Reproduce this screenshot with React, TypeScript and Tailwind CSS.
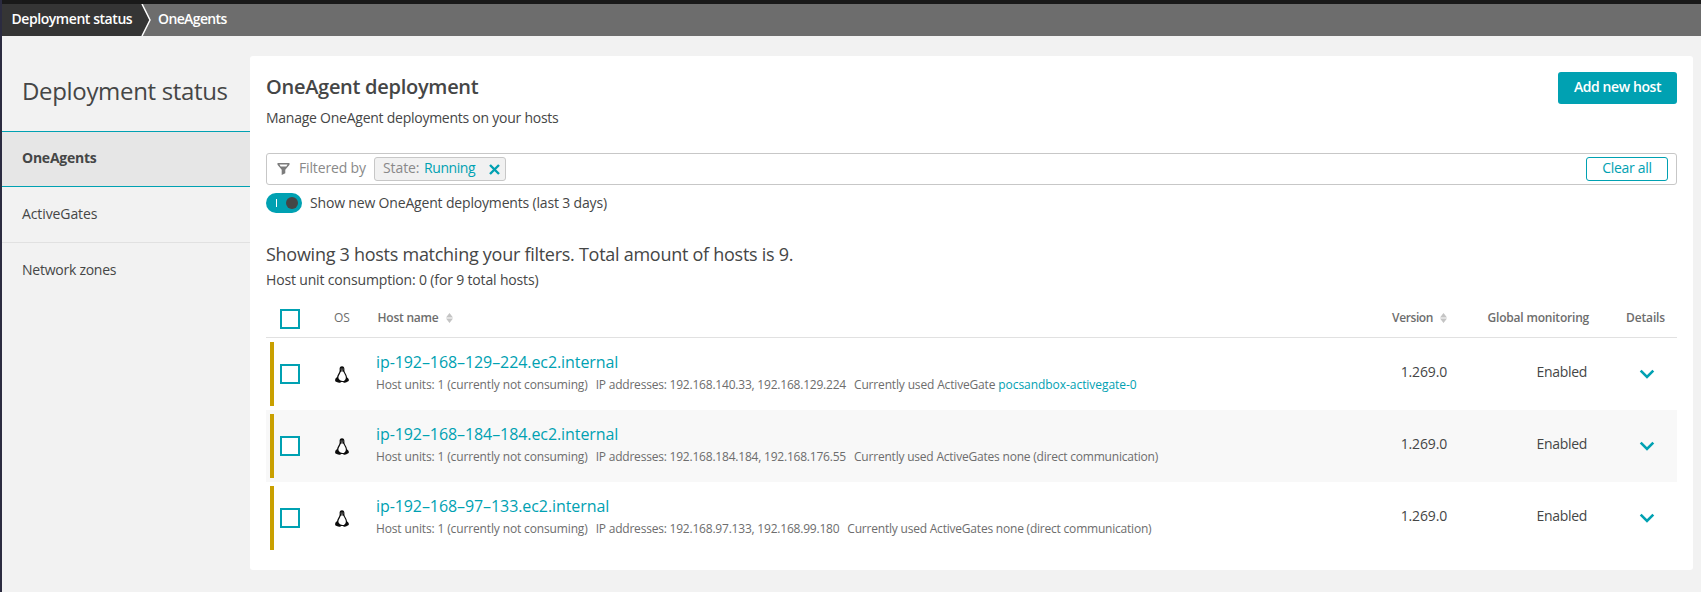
import type { ReactNode } from "react";

const hosts = [
  { name: "ip-192–168–129–224.ec2.internal", ips: "192.168.140.33, 192.168.129.224", gate: "pocsandbox-activegate-0" },
  { name: "ip-192–168–184–184.ec2.internal", ips: "192.168.184.184, 192.168.176.55", gate: null },
  { name: "ip-192–168–97–133.ec2.internal", ips: "192.168.97.133, 192.168.99.180", gate: null },
];

const columns = "grid grid-cols-[68px_42px_1fr_120px_145px_86px]";

function Checkbox() {
  return <div role="checkbox" aria-checked="false" className="size-5 border-2 border-[#00a1b2] bg-white" />;
}

function SortIcon() {
  return (
    <svg width="7" height="10" viewBox="0 0 7 10" fill="#c4c4c4">
      <path d="M3.5 0 7 4.400H0zM3.5 10 0 5.600h7z" />
    </svg>
  );
}

function Tux() {
  return (
    <svg width="14" height="17" viewBox="0 0 14 17">
      <path
        fill="#0c0c0c"
        d="M7 .2C5.3.2 4.5 1.4 4.6 3c.1 1.700.1 2.600-.8 4.100C2.800 8.500 2.200 10 2 11.300.7 12 .1 13.200.1 14.300c0 1.200.6 1.500 1.600 1.700 1.100.3 2.100.9 3.100.7.7-.1 1-.5 1.300-.8h1.900c.3.3.6.7 1.300.8 1 .1 1.700-.4 2.700-.8 1-.4 1.900-.6 1.900-1.600 0-1.100-.7-2.200-1.800-2.800-.2-1.600-.8-3-1.800-4.400C9.400 5.600 9.400 4.700 9.400 3 9.400 1.300 8.700.2 7 .2Z"
      />
      <path fill="#fff" d="M7 5.300c1.200 0 1.700.9 2.200 2 .6 1.400 1.600 2.600 1.600 4.300 0 1.600-.7 2.900-1.900 3.300-1.100.3-2.500.2-3.300-.3-1-.7-2.200-1.700-2.200-3.100s1-2.600 1.600-3.900C5.400 6.400 5.800 5.300 7 5.300Z" />
      <path fill="#9a9a9a" d="M5.700 2.500h.9v1.200h-.9zM7.500 2.500h.9v1.200h-.9zM5.900 4.100h2.300l-1.200.9z" />
    </svg>
  );
}

function Chevron() {
  return (
    <svg width="16" height="11" viewBox="0 0 16 11" fill="none" stroke="#00a1b2" strokeWidth="2.6">
      <path d="M1.700 1.600 8 7.900l6.300-6.300" />
    </svg>
  );
}

function Header({ children, className = "" }: { children: ReactNode; className?: string }) {
  return <div className={`flex items-center pb-px text-[12px] leading-4 text-[#6d6d6d] ${className}`}>{children}</div>;
}

export default function App() {
  return (
    <div className="flex h-[592px] w-full overflow-hidden bg-[#f2f2f2] font-['Open_Sans','Noto_Sans',sans-serif] text-[14px] leading-5 whitespace-nowrap text-[#454646]">
      <div className="w-[2px] shrink-0 bg-[#2b2b40]" />
      <div className="flex min-w-0 flex-1 flex-col">
        <div className="h-1 shrink-0 bg-[#191919]" />
        <nav className="flex h-8 shrink-0 bg-[#6d6d6d] font-semibold text-white">
          <div className="w-[139px] bg-[#353535] pt-[5px] pl-[9.5px] tracking-[-0.44px]">Deployment status</div>
          <svg width="11" height="32" viewBox="0 0 11 32">
            <path d="M0 0h1l8 16-8 16H0z" fill="#353535" />
            <path d="M1 0l8 16-8 16" fill="none" stroke="#fff" strokeWidth="1.5" />
          </svg>
          <div className="pt-[5px] pl-[6px] tracking-[-0.62px]">OneAgents</div>
        </nav>

        <div className="flex flex-1">
          <aside className="w-[248px] shrink-0">
            <h1 className="h-[95px] pt-[37px] pl-[20px] text-[24px] leading-9 tracking-[-0.33px]">Deployment status</h1>
            <div className="flex h-14 items-center border-y border-[#00a1b2] bg-[#e6e6e6] pb-0.5 pl-5 font-bold tracking-[-0.24px]">OneAgents</div>
            <div className="flex h-14 items-center border-b border-[#e1e1e1] pb-px pl-5 tracking-[-0.1px]">ActiveGates</div>
            <div className="flex h-14 items-center pb-0.5 pl-5 tracking-[-0.25px]">Network zones</div>
          </aside>

          <main className="mt-5 h-[514px] w-[1443px] rounded-[3px] bg-white px-4 pt-4">
            <div className="flex h-[81px] items-start justify-between">
              <div>
                <h2 className="pt-px text-[20px] leading-7 font-semibold tracking-[-0.28px]">OneAgent deployment</h2>
                <p className="mt-[7px] tracking-[-0.25px]">Manage OneAgent deployments on your hosts</p>
              </div>
              <button className="flex h-8 w-[119px] items-center justify-center rounded-[3px] bg-[#00a1b2] pb-0.5 font-semibold tracking-[-0.42px] text-white">
                Add new host
              </button>
            </div>

            <div className="flex h-8 items-center rounded-[3px] border border-[#c7c7c7] pr-2 pl-[10px] text-[#898989]">
              <svg width="13" height="12" viewBox="0 0 13 12">
                <path fill="#7c7c7c" fillRule="evenodd" d="M.5 0h12v1.800L8.300 6.800v3.500L4.700 12V6.800L.5 1.800zM2.400 1.500l1.300 1.900h5.600l1.300-1.900z" />
              </svg>
              <span className="ml-[9px] w-[75px] pb-0.5 tracking-[-0.15px]">Filtered by</span>
              <span className="flex h-6 w-[132px] items-center rounded-[3px] border border-[#c7c7c7] bg-[#f1f1f1] pl-2">
                <span className="w-[41px] pb-0.5 tracking-[-0.1px]">State:</span>
                <span className="w-[65px] pb-0.5 tracking-[-0.42px] text-[#00a1b2]">Running</span>
                <svg width="11" height="11" viewBox="0 0 11 11" stroke="#00a1b2" strokeWidth="2.4">
                  <path d="M1 1l9 9M10 1l-9 9" />
                </svg>
              </span>
              <button className="ml-auto flex h-6 w-[82px] items-center justify-center rounded-[3px] border border-[#00a1b2] pb-0.5 tracking-[-0.3px] text-[#00a1b2]">
                Clear all
              </button>
            </div>

            <div className="mt-2 flex h-5 items-center">
              <div role="switch" aria-checked="true" className="flex h-5 w-9 items-center justify-between rounded-full bg-[#00a1b2] pr-1 pl-[10px]">
                <span className="h-2 w-px bg-white" />
                <span className="size-3 rounded-full bg-[#454646]" />
              </div>
              <span className="ml-2 tracking-[-0.17px]">Show new OneAgent deployments (last 3 days)</span>
            </div>

            <h3 className="mt-[29px] text-[18px] leading-6 tracking-[-0.27px]">Showing 3 hosts matching your filters. Total amount of hosts is 9.</h3>
            <p className="mt-1 tracking-[-0.16px]">Host unit consumption: 0 (for 9 total hosts)</p>

            <div className="mt-[10px]">
              <div className={`${columns} h-[38px] border-b border-[#e1e1e1]`}>
                <div className="pt-[9px] pl-[14px]"><Checkbox /></div>
                <Header>OS</Header>
                <Header className="gap-[7px] pl-[1.5px] font-semibold tracking-[-0.22px]">Host name <SortIcon /></Header>
                <Header className="-mr-px justify-end gap-[7px] font-semibold tracking-[-0.4px]">Version <SortIcon /></Header>
                <Header className="justify-end pr-[2px] font-semibold tracking-[-0.2px]">Global monitoring</Header>
                <Header className="justify-end pr-3 font-semibold tracking-[-0.15px]">Details</Header>
              </div>
              {hosts.map((host, index) => (
                <div key={host.name} className={`${columns} h-[72px] ${index % 2 === 1 ? "bg-[#f8f8f8]" : "bg-white"}`}>
                  <div className="flex pl-1">
                    <div className="mt-1 h-16 w-1 bg-[#c9a000]" />
                    <div className="mt-[26px] ml-[6px]"><Checkbox /></div>
                  </div>
                  <div className="pt-7 pl-px"><Tux /></div>
                  <div className="pt-[14px]">
                    <a className="block text-[16px] leading-5 tracking-[-0.08px] text-[#00a1b2]">{host.name}</a>
                    <div className="mt-[5px] flex text-[12px] leading-4 tracking-[-0.21px] text-[#6d6d6d]">
                      <span className="mr-2 tracking-[-0.14px]">Host units: 1 (currently not consuming)</span>
                      <span className="mr-2">IP addresses: {host.ips}</span>
                      {host.gate ? (
                        <span><span className="tracking-[-0.16px]">Currently used ActiveGate </span><a className="tracking-[-0.05px] text-[#00a1b2]">{host.gate}</a></span>
                      ) : (
                        <span>Currently used ActiveGates none (direct communication)</span>
                      )}
                    </div>
                  </div>
                  <div className="-mr-px pt-6 text-right tracking-[-0.16px]">1.269.0</div>
                  <div className="pt-6 pr-1 text-right tracking-[-0.32px]">Enabled</div>
                  <div className="flex justify-end pt-[31px] pr-[22px]"><Chevron /></div>
                </div>
              ))}
            </div>
          </main>
        </div>
      </div>
    </div>
  );
}
